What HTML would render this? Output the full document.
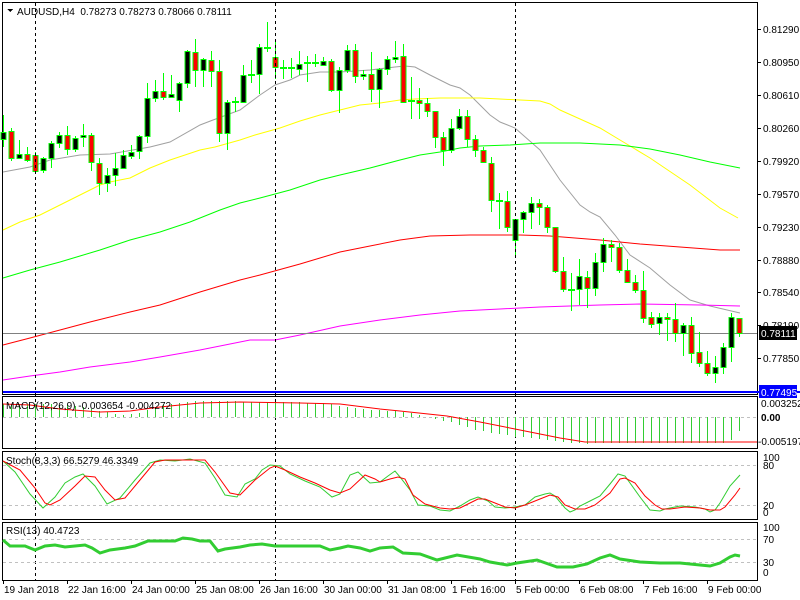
<!DOCTYPE html>
<html><head><meta charset="utf-8"><style>
html,body{margin:0;padding:0;background:#fff;width:800px;height:600px;overflow:hidden}
svg{display:block}
text{font-family:"Liberation Sans",sans-serif;font-size:10px;fill:#000}
</style></head><body>
<svg id="s" width="800" height="600" xmlns="http://www.w3.org/2000/svg" shape-rendering="crispEdges"></svg>
<script>
var s=document.getElementById('s'),h=[];
function P(pts){return pts.map(function(p){return p[0]+','+p[1]}).join(' ')}
function pl(pts,c,w,ex){h.push('<polyline points="'+P(pts)+'" fill="none" stroke="'+c+'" stroke-width="'+(w||1)+'" shape-rendering="auto" '+(ex||'')+'/>')}
function ln(x1,y1,x2,y2,c,w,ex){h.push('<line x1="'+x1+'" y1="'+y1+'" x2="'+x2+'" y2="'+y2+'" stroke="'+c+'" stroke-width="'+(w||1)+'" '+(ex||'')+'/>')}
function tx(x,y,t,ex){h.push('<text x="'+x+'" y="'+y+'" '+(ex||'')+'>'+t+'</text>')}
[[2,2,755,392],[2,396,755,52],[2,451,755,68],[2,522,755,58]].forEach(function(r){h.push('<rect x="'+(r[0]+.5)+'" y="'+(r[1]+.5)+'" width="'+r[2]+'" height="'+r[3]+'" fill="none" stroke="#000"/>')});
pl([[3,172],[30,167],[50,160],[80,155],[110,154],[150,147],[170,142],[200,125],[213,120],[240,110],[260,95],[275,85],[290,80],[300,75],[320,72],[340,72],[370,70],[395,67],[405,66],[415,67],[430,75],[450,85],[460,88],[470,95],[480,105],[490,115],[500,122],[515,128],[540,150],[560,180],[580,205],[590,212],[600,217],[615,235],[630,255],[650,268],[670,285],[690,300],[710,306],[740,313]],'#a0a0a0');
pl([[3,230],[20,222],[40,215],[60,205],[80,195],[100,185],[110,182],[130,178],[150,168],[170,160],[200,150],[215,147],[240,140],[255,135],[280,128],[300,121],[320,115],[340,110],[360,105],[380,103],[400,100],[415,99],[440,98],[480,98],[500,99],[540,101],[550,104],[560,110],[600,128],[620,140],[650,158],[690,185],[720,208],[738,218]],'#ffff00');
pl([[3,278],[30,270],[60,262],[80,256],[100,250],[130,240],[160,232],[190,222],[220,210],[240,203],[260,198],[290,190],[320,180],[340,175],[370,168],[400,160],[420,155],[440,152],[460,148],[480,146],[510,145],[540,143],[580,143],[620,145],[650,149],[680,155],[710,162],[740,168]],'#00ff00');
pl([[3,345],[30,338],[60,330],[90,322],[130,312],[160,305],[200,292],[240,280],[260,275],[300,264],[340,252],[370,246],[400,240],[430,236],[470,235],[520,235],[550,236],[600,240],[640,244],[680,247],[720,250],[740,250]],'#ff0000');
pl([[3,380],[30,376],[60,372],[90,367],[130,362],[160,357],[200,350],[250,340],[275,340],[300,335],[340,326],[380,320],[420,315],[460,311],[500,309],[540,307],[600,305],[640,304],[700,305],[740,306]],'#ff00ff');
ln(3,333.5,757,333.5,'#808080');
ln(3,392,800,392,'#0000ff',2);
var C=[
['b',345,395,418,440],['r',383,394,475,483],['b',420,463,475,478],['r',440,463,481,485],['r',455,466,514,520],['b',470,475,511,518],['b',422,430,475,503],['b',395,406,430,445],['r',378,406,448,465],['b',407,415,448,455],['b',372,406,412,440],['r',400,406,487,512],['r',475,490,550,584],['b',505,526,550,575],['b',460,505,526,557],['b',450,466,505,505],['b',436,455,469,478],['b',405,409,454,478],['b',250,295,409,430],['b',240,274,295,305],['r',220,274,292,300],['b',225,283,292,293],['b',245,250,301,335],['b',150,154,250,265],['r',118,157,211,262],['b',174,178,211,262],['r',154,181,214,262],['r',181,214,400,427],['b',300,307,400,450],['d',290,307,307,335],['b',195,226,307,307],['d',180,224,224,250],['b',133,142,223,283],
['d',66,143,143,155],['r',118,170,202,237],['d',180,203,203,237],['d',175,203,203,233],['b',153,193,206,225],['d',168,190,190,247],['d',162,188,188,200],['b',172,184,194,195],['r',178,184,271,277],['b',200,211,271,338],['b',135,151,211,218],['r',132,151,229,248],['b',210,223,229,240],['r',155,223,268,306],['b',204,208,268,325],['b',168,178,208,225],['b',123,170,178,190],['r',132,168,307,307],['d',232,303,303,358],['r',264,300,310,358],['r',295,310,334,350],['r',334,334,412,445],['r',395,411,449,497],['b',357,385,449,458],['b',327,349,385,390],['r',330,349,418,440],['r',405,418,450,470],['r',440,451,487,490],['r',470,490,600,637],['d',578,602,602,686],['r',573,604,682,695],
['b',657,657,720,772],['b',632,636,656,700],['b',590,610,636,686],['r',598,610,622,676],['r',615,622,680,698],['r',680,680,812,818],['r',770,813,868,876],['d',818,870,870,932],['b',776,828,868,916],['r',812,832,865,925],['b',760,787,865,887],['b',715,731,785,815],['r',720,731,740,785],['r',730,742,810,818],['r',778,810,845,850],['r',825,845,870,880],['r',812,870,955,970],['r',935,952,972,985],['b',940,952,968,1005],['r',940,952,958,1022],['r',910,958,998,1025],['b',968,975,998,1068],['r',950,975,1058,1088],['r',995,1057,1088,1102],['r',1052,1090,1120,1128],['b',1068,1102,1120,1150],['b',1030,1042,1102,1122],['b',940,952,1042,1085],['r',955,955,998,1012]];
C.forEach(function(c,k){var x=3+8*k+0.5;var hi=Math.round(c[1]/3),t=Math.round(c[2]/3),b=Math.round(c[3]/3),lo=Math.round(c[4]/3);
ln(x,hi,x,lo,'#00ff00');
if(c[0]=='d'||b-t<2){h.push('<rect x="'+(x-3.5)+'" y="'+(t-1)+'" width="7" height="2" fill="#00ff00"/>');if(c[0]=='d')return;}
h.push('<rect x="'+(x-2.5)+'" y="'+(t+.5)+'" width="5" height="'+Math.max(1,b-t)+'" fill="'+(c[0]=='b'?'#000':'#ff0000')+'" stroke="#00ff00"/>');});
[35,275,515].forEach(function(x){ln(x+.5,3,x+.5,580,'#000',1,'stroke-dasharray="3,3"')});
var L=[['0.81290',29],['0.80950',62],['0.80610',95],['0.80260',128],['0.79920',161],['0.79570',194],['0.79230',227],['0.78880',260],['0.78540',292],['0.78190',325],['0.77850',358]];
L.forEach(function(l){ln(757,l[1]+.5,761,l[1]+.5,'#000');tx(763,l[1]+4,l[0])});
h.push('<rect x="759" y="326" width="38" height="14" fill="#000"/>');tx(761,337,'0.78111','style="fill:#fff"');
h.push('<rect x="759" y="385" width="38" height="13" fill="#0000ff"/>');tx(761,396,'0.77495','style="fill:#fff"');
h.push('<polygon points="7,9 13,9 10,12" fill="#000"/>');
tx(17,15,'AUDUSD,H4  0.78273 0.78273 0.78066 0.78111','xml:space="preserve"');
ln(3,417.5,757,417.5,'#c0c0c0',1,'stroke-dasharray="3,3"');
var M=[404,404,404,404,404,404,404,405,405,406,407,409,411,412,414,415,414,413,410,407,405,404,403,402,401,401,401,401,401,401,402,402,402,402,402,402,402,402,403,403,403,404,406,407,408,409,410,410,411,411,412,413,415,417,419,421,422,425,427,430,431,433,434,435,437,437,438,439,440,441,442,443,443,444,443,443,443,443,443,443,443,443,443,443,443,443,443,443,443,443,443,440,431];
M.forEach(function(v,k){var x=3+8*k+.5;ln(x,Math.min(v,417),x,Math.max(v,417),'#32cd32')});
pl([[3,404],[30,405],[60,409],[100,412],[130,411],[160,407],[200,403],[240,402],[300,403],[340,404],[380,409],[400,411],[447,416],[480,422],[515,429],[540,434],[560,438],[585,442],[757,442]],'#ff0000');
tx(6,409,'MACD(12,26,9) -0.003654 -0.004272');
tx(761,407,'0.003252');tx(761,421,'0.00','style="font-weight:bold"');tx(758,445,'-0.005197');
ln(3,465.5,757,465.5,'#c0c0c0',1,'stroke-dasharray="3,3"');ln(3,505.5,757,505.5,'#c0c0c0',1,'stroke-dasharray="3,3"');
pl([[3,461],[15,472],[30,494],[43,508],[55,497],[65,483],[75,477],[83,474],[95,486],[107,504],[120,498],[135,480],[150,463],[160,460],[175,461],[190,459],[205,463],[215,478],[225,495],[237,497],[245,484],[255,479],[262,470],[270,465],[280,466],[290,474],[305,481],[320,487],[332,497],[340,494],[350,475],[358,472],[370,483],[380,482],[388,476],[395,471],[400,477],[410,490],[418,505],[430,506],[440,510],[450,511],[460,506],[470,500],[478,497],[488,501],[495,507],[505,508],[515,507],[525,505],[535,497],[545,494],[550,493],[555,496],[565,508],[570,512],[575,510],[580,506],[590,501],[600,496],[610,484],[618,474],[625,476],[640,497],[650,510],[660,511],[665,509],[680,506],[695,507],[705,509],[710,512],[715,510],[720,503],[730,486],[740,475]],'#32cd32');
pl([[3,461],[20,470],[35,488],[45,503],[50,505],[60,500],[75,486],[85,476],[95,477],[105,490],[115,500],[125,498],[140,480],[155,462],[165,460],[190,460],[205,460],[215,472],[230,493],[240,495],[255,480],[270,468],[275,466],[285,470],[300,477],[315,483],[330,490],[340,493],[350,489],[365,475],[375,479],[380,482],[390,479],[398,477],[405,479],[413,495],[425,504],[440,508],[450,509],[460,508],[470,503],[478,499],[485,499],[495,503],[505,507],[515,508],[525,505],[540,499],[550,495],[558,497],[565,505],[575,509],[585,509],[595,505],[610,493],[620,479],[625,478],[635,483],[645,496],[655,505],[662,509],[670,509],[685,507],[700,508],[710,510],[720,510],[725,507],[735,495],[740,488]],'#ff0000');
tx(6,464,'Stoch(8,3,3) 66.5279 46.3349');
tx(763,461,'100');tx(763,469,'80');tx(763,509,'20');tx(763,516,'0');
ln(3,539.5,757,539.5,'#c0c0c0',1,'stroke-dasharray="3,3"');ln(3,562.5,757,562.5,'#c0c0c0',1,'stroke-dasharray="3,3"');
pl([[3,540],[10,546],[25,546],[35,550],[45,546],[55,545],[65,547],[75,546],[85,545],[92,548],[100,553],[110,550],[125,548],[135,546],[148,541],[175,541],[183,538],[192,539],[200,541],[210,541],[218,551],[225,549],[240,547],[250,545],[262,544],[275,546],[290,546],[320,546],[330,550],[340,548],[348,546],[360,548],[370,551],[380,548],[393,547],[403,553],[420,554],[437,560],[457,555],[480,559],[490,562],[507,565],[517,563],[537,560],[557,567],[573,567],[587,564],[600,558],[610,555],[620,559],[640,562],[660,563],[680,563],[700,565],[710,566],[720,563],[730,557],[735,555],[740,556]],'#32cd32',3);
tx(6,534,'RSI(13) 40.4723');
tx(763,531,'100');tx(763,543,'70');tx(763,566,'30');tx(763,576,'0');
[['19 Jan 2018',3],['22 Jan 16:00',67],['24 Jan 00:00',131],['25 Jan 08:00',195],['26 Jan 16:00',259],['30 Jan 00:00',323],['31 Jan 08:00',387],['1 Feb 16:00',451],['5 Feb 00:00',515],['6 Feb 08:00',579],['7 Feb 16:00',643],['9 Feb 00:00',707]].forEach(function(t){ln(t[1]+.5,580,t[1]+.5,584,'#000');tx(t[1]+1,593,t[0])});
s.innerHTML=h.join('');
</script>
</body></html>
